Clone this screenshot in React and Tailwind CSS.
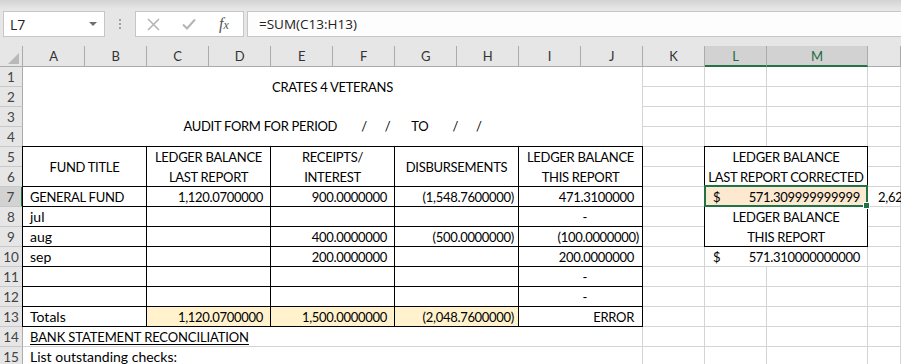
import React from 'react';

const COL_START = ['col-start-1','col-start-2','col-start-3','col-start-4','col-start-5','col-start-6','col-start-7','col-start-8','col-start-9','col-start-10','col-start-11','col-start-12','col-start-13','col-start-14','col-start-15'];
const ROW_START = ['row-start-1','row-start-2','row-start-3','row-start-4','row-start-5','row-start-6','row-start-7','row-start-8','row-start-9','row-start-10','row-start-11','row-start-12','row-start-13','row-start-14','row-start-15','row-start-16'];
const LETTERS = ['A','B','C','D','E','F','G','H','I','J','K','L','M',''];

const BOX = '-ml-px -mt-px border border-black flex items-center whitespace-nowrap';

const ROWS = [
  { r: 7, a: 'GENERAL FUND', c: '1,120.0700000', e: '900.0000000', g: '(1,548.7600000)', i: '471.3100000' },
  { r: 8, a: 'jul', lower: true, i: '-' },
  { r: 9, a: 'aug', lower: true, e: '400.0000000', g: '(500.0000000)', i: '(100.0000000)' },
  { r: 10, a: 'sep', lower: true, e: '200.0000000', i: '200.0000000' },
  { r: 11, i: '-' },
  { r: 12, i: '-' },
  { r: 13, a: 'Totals', lower: true, c: '1,120.0700000', e: '1,500.0000000', g: '(2,048.7600000)', i: 'ERROR', cream: true },
];

function padCD(v) {
  if (!v) return 'pr-[7px]';
  return v.startsWith('(') ? 'pr-[3px]' : 'pr-[7px]';
}
function padG(v) {
  if (!v) return 'pr-[4px]';
  return v.startsWith('(') ? 'pr-[4px]' : 'pr-[8px]';
}
function padI(v) {
  if (v === '-') return 'pr-[55px]';
  if (v && v.startsWith('(')) return 'pr-[3px]';
  return 'pr-[8px]';
}

function Toolbar() {
  return (
    <div className="h-[46px] bg-[linear-gradient(#d3d3d3,#e6e6e6_9px)] flex items-start pt-[11px]">
      <div className="ml-[3px] w-[102px] h-[26px] bg-white border border-[#c6c6c6] flex items-center pl-[6px] pr-[7px] text-[14px] text-[#222] font-['Open_Sans',sans-serif]">
        <span>L7</span>
        <svg className="ml-auto" width="8" height="4" viewBox="0 0 8 4"><polygon points="0,0 8,0 4,4" fill="#6f6f6f" /></svg>
      </div>
      <div className="w-[30px] h-[26px] flex flex-col items-center justify-center gap-[2px]">
        <div className="w-[2px] h-[2px] bg-[#a0a0a0]" />
        <div className="w-[2px] h-[2px] bg-[#a0a0a0]" />
        <div className="w-[2px] h-[2px] bg-[#a0a0a0]" />
      </div>
      <div className="w-[109px] h-[26px] bg-white border border-[#c6c6c6] flex items-center pl-[11px]">
        <svg width="13" height="13" viewBox="0 0 13 13"><path d="M1 1L12 12M12 1L1 12" stroke="#b4b4b4" strokeWidth="1.6" fill="none" /></svg>
        <svg className="ml-[22px]" width="14" height="12" viewBox="0 0 14 12"><path d="M1 6.5L5 10.5L13 1.5" stroke="#b4b4b4" strokeWidth="2" fill="none" /></svg>
        <span className="ml-[23px] italic text-[16px] text-[#555] font-['Liberation_Serif',serif] leading-none">f<span className="text-[12px]">x</span></span>
      </div>
      <div className="ml-[3px] flex-1 -mr-[2px] h-[26px] bg-[#fdfdfd] border border-[#c6c6c6] flex items-center pl-[11px] text-[13.5px] text-[#222] font-['Open_Sans',sans-serif]">
        =SUM(C13:H13)
      </div>
    </div>
  );
}

function Sheet() {
  const base = [];
  for (let r = 1; r <= 15; r++) {
    for (let c = 0; c < 14; c++) {
      base.push(<div key={`b${r}-${c}`} className={`${ROW_START[r]} ${COL_START[c + 1]} border-r border-b border-[#d4d4d4]`} />);
    }
  }
  const rowHeads = [];
  for (let r = 1; r <= 15; r++) {
    const sel = r === 7;
    rowHeads.push(
      <div
        key={`rh${r}`}
        className={`${ROW_START[r]} col-start-1 flex items-center justify-center text-[13.5px] tracking-normal text-[#444] border-b border-b-[#c8c8c8] ${sel ? 'bg-[#d2d2d2] border-r-2 border-r-[#217346]' : 'bg-[#e6e6e6] border-r border-r-[#ababab]'}`}
      >
        {r}
      </div>
    );
  }
  const colHeads = LETTERS.map((l, i) => {
    const sel = i === 11 || i === 12;
    return (
      <div
        key={`ch${i}`}
        className={`row-start-1 ${COL_START[i + 1]} flex items-center justify-center border-r border-r-[#ababab] ${sel ? 'bg-[#d2d2d2] text-[#1e6b41] border-b-2 border-b-[#217346]' : 'bg-[#e6e6e6] text-[#333] border-b border-b-[#ababab]'}`}
      >
        {l}
      </div>
    );
  });

  return (
    <div className="grid grid-cols-[23px_repeat(12,62px)_101px_1fr] grid-rows-[21px_repeat(15,20px)] text-[13px] tracking-[-0.3px] leading-[20px]">
      {base}
      <div className="row-start-1 col-start-1 bg-[#e6e6e6] border-r border-b border-[#ababab] relative">
        <svg className="absolute left-0 top-0" width="22" height="20" viewBox="0 0 22 20"><polygon points="19,7 19,18 8,18" fill="#b9b9b9" /></svg>
      </div>
      {colHeads}
      {rowHeads}

      {/* Title block A1:J4 */}
      <div className="row-start-2 row-span-4 col-start-2 col-span-10 bg-white border-r border-b border-[#d4d4d4] flex flex-col whitespace-nowrap">
        <div className="h-[40px] flex items-center justify-center">CRATES 4 VETERANS</div>
        <div className="h-[40px] flex items-center justify-center">
          <span>AUDIT FORM FOR PERIOD</span>
          <span className="ml-[24px]">/</span>
          <span className="ml-[18px]">/</span>
          <span className="ml-[21px]">TO</span>
          <span className="ml-[24px]">/</span>
          <span className="ml-[18px]">/</span>
        </div>
      </div>

      {/* Table header rows 5-6 */}
      <div className={`row-start-6 row-span-2 col-start-2 col-span-2 ${BOX} bg-white justify-center`}>FUND TITLE</div>
      <div className={`row-start-6 row-span-2 col-start-4 col-span-2 ${BOX} bg-white flex-col justify-center`}>
        <div>LEDGER BALANCE</div>
        <div>LAST REPORT</div>
      </div>
      <div className={`row-start-6 row-span-2 col-start-6 col-span-2 ${BOX} bg-white flex-col justify-center`}>
        <div>RECEIPTS/</div>
        <div>INTEREST</div>
      </div>
      <div className={`row-start-6 row-span-2 col-start-8 col-span-2 ${BOX} bg-white justify-center`}>DISBURSEMENTS</div>
      <div className={`row-start-6 row-span-2 col-start-10 col-span-2 ${BOX} bg-white flex-col justify-center`}>
        <div>LEDGER BALANCE</div>
        <div>THIS REPORT</div>
      </div>

      {/* Table body rows 7-13 */}
      {ROWS.map((row) => {
        const rs = ROW_START[row.r];
        const fill = row.cream ? 'bg-[#fff2cc]' : 'bg-white';
        const aText = row.lower ? 'text-[14px] tracking-normal' : '';
        return (
          <React.Fragment key={`row${row.r}`}>
            <div className={`${rs} col-start-2 col-span-2 ${BOX} bg-white pl-[7px] ${aText}`}>{row.a || ''}</div>
            <div className={`${rs} col-start-4 col-span-2 ${BOX} ${fill} justify-end ${padCD(row.c)}`}>{row.c || ''}</div>
            <div className={`${rs} col-start-6 col-span-2 ${BOX} ${fill} justify-end ${padCD(row.e)}`}>{row.e || ''}</div>
            <div className={`${rs} col-start-8 col-span-2 ${BOX} ${fill} justify-end ${padG(row.g)}`}>{row.g || ''}</div>
            <div className={`${rs} col-start-10 col-span-2 ${BOX} bg-white justify-end ${padI(row.i)}`}>{row.i || ''}</div>
          </React.Fragment>
        );
      })}

      {/* Rows 14-15 */}
      <div className="row-start-15 col-start-2 col-span-10 bg-white border-r border-b border-[#d4d4d4] flex items-center pl-[7px] whitespace-nowrap tracking-[-0.12px]">
        <span className="underline underline-offset-[2px] decoration-1">BANK STATEMENT RECONCILIATION</span>
      </div>
      <div className="row-start-16 col-start-2 col-span-10 bg-white border-r border-b border-[#d4d4d4] flex items-center pl-[7px] whitespace-nowrap text-[14px] tracking-normal">
        List outstanding checks:
      </div>

      {/* Right side boxes */}
      <div className={`row-start-6 row-span-2 col-start-13 col-span-2 ${BOX} bg-white flex-col justify-center`}>
        <div>LEDGER BALANCE</div>
        <div>LAST REPORT CORRECTED</div>
      </div>
      <div className={`row-start-9 row-span-2 col-start-13 col-span-2 ${BOX} bg-white flex-col justify-center`}>
        <div>LEDGER BALANCE</div>
        <div>THIS REPORT</div>
      </div>
      <div className="row-start-8 col-start-13 col-span-2 bg-[#fde9d0] flex items-center justify-between pl-[8px] pr-[8px] whitespace-nowrap">
        <span>$</span>
        <span>571.309999999999</span>
      </div>
      <div className="row-start-11 col-start-13 col-span-2 bg-white border-r border-b border-[#d4d4d4] flex items-center justify-between pl-[8px] pr-[7px] whitespace-nowrap">
        <span>$</span>
        <span>571.310000000000</span>
      </div>
      <div className="row-start-8 col-start-15 flex items-center pl-[10px] whitespace-nowrap overflow-hidden">2,62</div>

      {/* Selection */}
      <div className="row-start-8 col-start-13 col-span-2 -ml-px -mt-[2px] border-2 border-[#217346] relative pointer-events-none">
        <div className="absolute -right-[4px] -bottom-[4px] w-[7px] h-[7px] bg-[#217346] border border-white" />
      </div>
    </div>
  );
}

export default function App() {
  return (
    <div className="w-[901px] h-[364px] overflow-hidden bg-white font-[Lato,sans-serif] text-black">
      <Toolbar />
      <Sheet />
    </div>
  );
}
